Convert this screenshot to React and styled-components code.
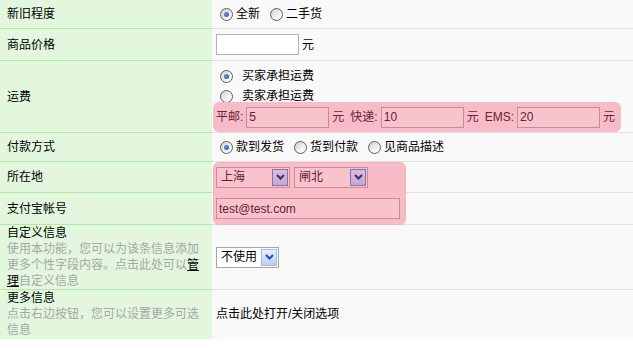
import React from 'react';
import styled, { createGlobalStyle } from 'styled-components';

const GlobalStyle = createGlobalStyle`
  * { box-sizing: border-box; }
  body {
    margin: 0;
    background: #fff;
    color: #000;
    font-family: "Liberation Sans", "Noto Sans CJK SC", sans-serif;
    font-size: 12px;
    line-height: 16px;
  }
`;

const Table = styled.div`
  width: 633px;
`;

const Row = styled.div`
  display: grid;
  grid-template-columns: 212px 1fr;
  height: ${props => props.$h}px;
`;

const Label = styled.div`
  padding: 0 6px 0 7px;
  background: #e3f7de;
  border-bottom: 1px solid ${props => (props.$last ? '#e3f7de' : '#b2e8a4')};
  display: flex;
  flex-direction: column;
  justify-content: ${props => (props.$top ? 'flex-start' : 'center')};
  line-height: 16px;
`;

const Desc = styled.div`
  color: #a6a6a6;
  line-height: 16px;
`;

const Manage = styled.a`
  color: #000;
  text-decoration: underline;
`;

const Field = styled.div`
  position: relative;
  padding: ${props => (props.$stack ? '5px 0 0 4px' : '0 0 0 4px')};
  background: #f9f9f9;
  border-bottom: 1px solid ${props => (props.$last ? '#f9f9f9' : '#e1e1e1')};
  display: flex;
  flex-direction: ${props => (props.$stack ? 'column' : 'row')};
  align-items: ${props => (props.$stack ? 'flex-start' : 'center')};
  white-space: nowrap;
`;

const OptionLine = styled.div`
  display: flex;
  align-items: center;
  height: 20px;
`;

const Option = styled.label`
  display: inline-flex;
  align-items: center;
  margin-right: 6px;
`;

const Radio = styled.span`
  width: 13px;
  height: 13px;
  border-radius: 50%;
  border: 1px solid #56606b;
  background: linear-gradient(135deg, #d2d2ca 0%, #f2f2ee 60%, #fff 100%);
  margin: 0 ${props => (props.$wide ? 9 : 3)}px 0 4px;
  display: flex;
  align-items: center;
  justify-content: center;
  flex-shrink: 0;

  &::after {
    content: '';
    width: 5px;
    height: 5px;
    border-radius: 50%;
    background: ${props => (props.$checked ? 'radial-gradient(circle at 40% 40%, #6f95e6, #2148b4)' : 'transparent')};
  }
`;

const TextInput = styled.input`
  position: relative;
  z-index: 2;
  width: ${props => props.$w}px;
  height: 21px;
  padding: 0 2px;
  margin: 0;
  font: inherit;
  border: 1px solid ${props => (props.$pink ? '#c78b9a' : '#b3b3b3')};
  background: ${props => (props.$pink ? '#f9c3cd' : '#fff')};
  color: ${props => (props.$pink ? '#5e1f2f' : '#000')};
  outline: none;
`;

const Unit = styled.span`
  margin-left: 3px;
`;

const FeeBox = styled.div`
  position: relative;
  display: inline-flex;
  align-items: center;
  gap: 3px;
  height: 30px;
  margin: -4px 0 0 -3px;
  padding: 0 6px 0 3px;
  background: #f7bcc7;
  border-radius: 6px;
  color: #6a2535;
`;

const FeeLabel = styled.span`
  margin-left: ${props => (props.$first ? 0 : 3)}px;
`;

const Highlight = styled.div`
  position: absolute;
  left: 1px;
  top: 0;
  width: 193px;
  height: 63px;
  background: #f7bcc7;
  border: 1px solid #f3b4c1;
  border-radius: 6px;
  z-index: 1;
`;

const Select = styled.div`
  position: relative;
  z-index: 2;
  display: inline-flex;
  align-items: center;
  justify-content: space-between;
  width: ${props => props.$w}px;
  height: 21px;
  margin-right: 4px;
  padding: 0 1px 0 4px;
  border: 1px solid ${props => (props.$pink ? '#c78b9a' : '#a5a5a5')};
  background: ${props => (props.$pink ? '#f9c3cd' : '#fff')};
  color: ${props => (props.$pink ? '#5e1f2f' : '#000')};
`;

const Arrow = styled.span`
  width: 16px;
  height: 17px;
  display: flex;
  align-items: center;
  justify-content: center;
  border: 1px solid ${props => (props.$pink ? '#8472b2' : '#a3b8e6')};
  background: ${props =>
    props.$pink
      ? 'linear-gradient(180deg, #dcbcd9 0%, #c7a6c9 100%)'
      : 'linear-gradient(180deg, #e9f0fd 0%, #bccdf2 100%)'};
  color: ${props => (props.$pink ? '#3a2a86' : '#1f4fa8')};
`;

const Chevron = () => (
  <svg width="9" height="6" viewBox="0 0 9 6">
    <path d="M1 1 L4.5 4.5 L8 1" fill="none" stroke="currentColor" strokeWidth="2" />
  </svg>
);

const Dropdown = ({ value, width, pink }) => (
  <Select $w={width} $pink={pink}>
    <span>{value}</span>
    <Arrow $pink={pink}>
      <Chevron />
    </Arrow>
  </Select>
);

export default function App() {
  return (
    <>
      <GlobalStyle />
      <Table>
        <Row $h={29}>
          <Label>新旧程度</Label>
          <Field>
            <Option><Radio $checked />全新</Option>
            <Option><Radio />二手货</Option>
          </Field>
        </Row>

        <Row $h={32}>
          <Label>商品价格</Label>
          <Field>
            <TextInput $w={83} defaultValue="" />
            <Unit>元</Unit>
          </Field>
        </Row>

        <Row $h={72}>
          <Label>运费</Label>
          <Field $stack>
            <OptionLine><Radio $checked $wide />买家承担运费</OptionLine>
            <OptionLine><Radio $wide />卖家承担运费</OptionLine>
            <FeeBox>
              <FeeLabel $first>平邮:</FeeLabel>
              <TextInput $w={83} $pink defaultValue="5" />
              <span>元</span>
              <FeeLabel>快递:</FeeLabel>
              <TextInput $w={83} $pink defaultValue="10" />
              <span>元</span>
              <FeeLabel>EMS:</FeeLabel>
              <TextInput $w={83} $pink defaultValue="20" />
              <span>元</span>
            </FeeBox>
          </Field>
        </Row>

        <Row $h={29}>
          <Label>付款方式</Label>
          <Field>
            <Option><Radio $checked />款到发货</Option>
            <Option><Radio />货到付款</Option>
            <Option><Radio />见商品描述</Option>
          </Field>
        </Row>

        <Row $h={31}>
          <Label>所在地</Label>
          <Field>
            <Highlight />
            <Dropdown value="上海" width={74} pink />
            <Dropdown value="闸北" width={74} pink />
          </Field>
        </Row>

        <Row $h={32}>
          <Label>支付宝帐号</Label>
          <Field>
            <TextInput $w={184} $pink defaultValue="test@test.com" />
          </Field>
        </Row>

        <Row $h={65}>
          <Label $top>
            <div>自定义信息</div>
            <Desc>
              使用本功能，您可以为该条信息添加更多个性字段内容。点击此处可以<Manage>管理</Manage>自定义信息
            </Desc>
          </Label>
          <Field>
            <Dropdown value="不使用" width={63} />
          </Field>
        </Row>

        <Row $h={49}>
          <Label $top $last>
            <div>更多信息</div>
            <Desc>点击右边按钮，您可以设置更多可选信息</Desc>
          </Label>
          <Field $last>点击此处打开/关闭选项</Field>
        </Row>
      </Table>
    </>
  );
}
